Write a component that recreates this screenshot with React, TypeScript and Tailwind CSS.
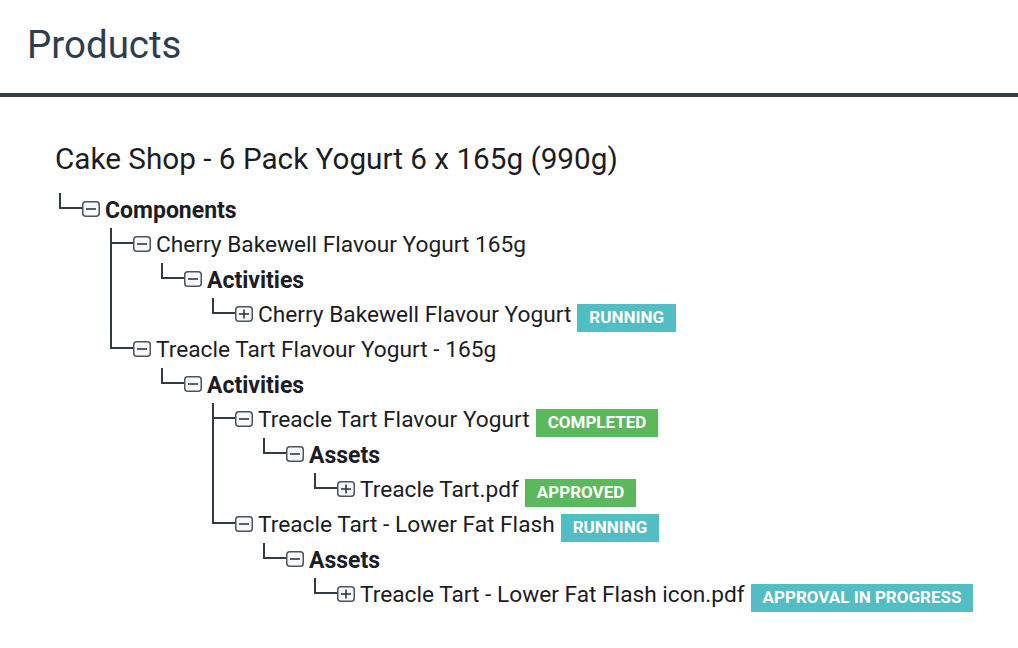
import React from 'react'

type Status = { label: string; color: string }

type Node = {
  label: string
  bold?: boolean
  open: boolean
  status?: Status
  children?: Node[]
}

const RUNNING = { label: 'Running', color: 'bg-[#53bdc4]' }
const COMPLETED = { label: 'Completed', color: 'bg-[#5cb85c]' }
const APPROVED = { label: 'Approved', color: 'bg-[#5cb85c]' }
const APPROVING = { label: 'Approval in progress', color: 'bg-[#53bdc4]' }

const tree: Node[] = [
  {
    label: 'Components',
    bold: true,
    open: true,
    children: [
      {
        label: 'Cherry Bakewell Flavour Yogurt 165g',
        open: true,
        children: [
          {
            label: 'Activities',
            bold: true,
            open: true,
            children: [{ label: 'Cherry Bakewell Flavour Yogurt', open: false, status: RUNNING }],
          },
        ],
      },
      {
        label: 'Treacle Tart Flavour Yogurt - 165g',
        open: true,
        children: [
          {
            label: 'Activities',
            bold: true,
            open: true,
            children: [
              {
                label: 'Treacle Tart Flavour Yogurt',
                open: true,
                status: COMPLETED,
                children: [
                  {
                    label: 'Assets',
                    bold: true,
                    open: true,
                    children: [{ label: 'Treacle Tart.pdf', open: false, status: APPROVED }],
                  },
                ],
              },
              {
                label: 'Treacle Tart - Lower Fat Flash',
                open: true,
                status: RUNNING,
                children: [
                  {
                    label: 'Assets',
                    bold: true,
                    open: true,
                    children: [
                      { label: 'Treacle Tart - Lower Fat Flash icon.pdf', open: false, status: APPROVING },
                    ],
                  },
                ],
              },
            ],
          },
        ],
      },
    ],
  },
]

function Toggle({ open }: { open: boolean }) {
  return (
    <svg width="18" height="16" viewBox="0 0 18 16" className="shrink-0 mb-[3px]">
      <rect x="0.75" y="0.75" width="16.5" height="14.5" rx="3" fill="#f7f8f9" stroke="#4a5562" strokeWidth="1.5" />
      <line x1="4" y1="8" x2="14" y2="8" stroke="#2f3a45" strokeWidth="1.6" />
      {!open && <line x1="9" y1="3.5" x2="9" y2="12.5" stroke="#2f3a45" strokeWidth="1.6" />}
    </svg>
  )
}

function Branch({ nodes }: { nodes: Node[] }) {
  return (
    <ul>
      {nodes.map((n, i) => (
        <li key={i} className="relative">
          <span className="absolute left-0 top-0 w-[23px] h-[16px] border-l-2 border-b-2 border-[#303b46]" />
          {i < nodes.length - 1 && (
            <span className="absolute left-0 top-[16px] bottom-0 border-l-2 border-[#303b46]" />
          )}
          <div className="h-[35px] flex items-center pl-[23px]">
            <Toggle open={n.open} />
            <span
              className={
                'ml-[5px] leading-none text-[#1c1c24] whitespace-nowrap ' +
                (n.bold ? 'font-bold text-[23px]' : 'text-[22.7px]')
              }
            >
              {n.label}
            </span>
            {n.status && (
              <span
                className={
                  'ml-[6px] mt-[5px] h-[28px] px-[12px] flex items-center text-[17px] font-bold uppercase text-white whitespace-nowrap ' +
                  n.status.color
                }
              >
                {n.status.label}
              </span>
            )}
          </div>
          {n.children && (
            <div className="pl-[51px]">
              <Branch nodes={n.children} />
            </div>
          )}
        </li>
      ))}
    </ul>
  )
}

export default function App() {
  return (
    <div className="w-[1018px] h-[648px] bg-white overflow-hidden" style={{ fontFamily: 'Roboto, sans-serif' }}>
      <header className="h-[97px] px-[27px] flex items-center border-b-4 border-[#353f49]">
        <h1 className="text-[38.5px] text-[#2d3e4f] leading-none -mt-[2px]">Products</h1>
      </header>
      <main className="pl-[55px]">
        <h2 className="mt-[44px] text-[29.7px] leading-[36px] text-[#1c1c24]">
          Cake Shop - 6 Pack Yogurt 6 x 165g (990g)
        </h2>
        <div className="mt-[16px] ml-[4px]">
          <Branch nodes={tree} />
        </div>
      </main>
    </div>
  )
}
